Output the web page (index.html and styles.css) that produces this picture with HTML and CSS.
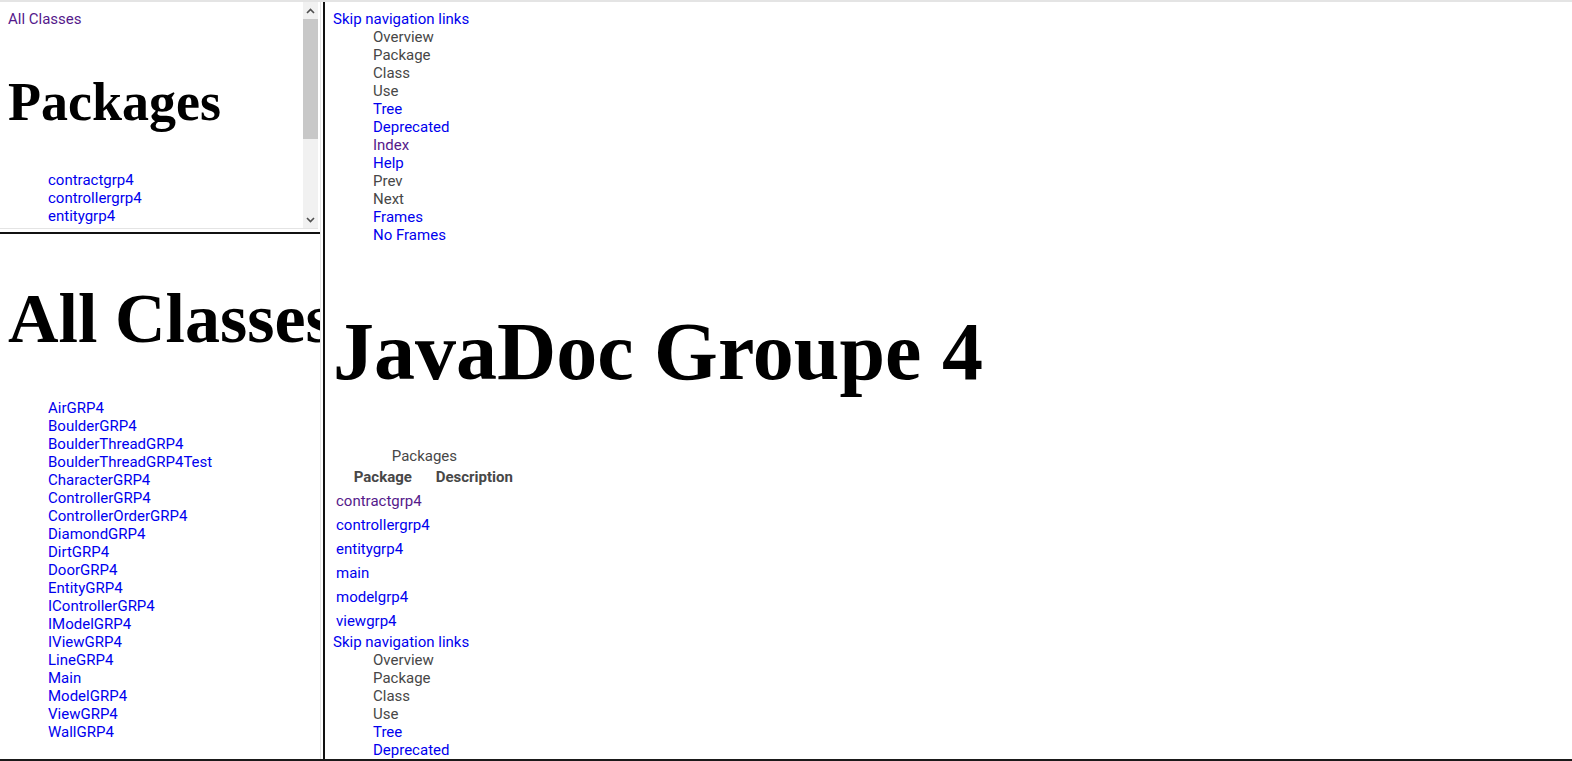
FILE: index.html
```html
<!DOCTYPE html>
<html lang="fr">
<head>
<meta charset="utf-8">
<title>JavaDoc Groupe 4</title>
<link rel="stylesheet" href="styles.css">
</head>
<body>
<div class="frameset">
  <div class="left">
    <div class="pkg-frame">
      <div class="pkg-content">
        <a class="link visited" href="#">All Classes</a>
        <h1 class="pkg-title">Packages</h1>
        <ul class="plain-list">
          <li><a class="link" href="#">contractgrp4</a></li>
          <li><a class="link" href="#">controllergrp4</a></li>
          <li><a class="link" href="#">entitygrp4</a></li>
          <li><a class="link" href="#">main</a></li>
          <li><a class="link" href="#">modelgrp4</a></li>
          <li><a class="link" href="#">viewgrp4</a></li>
        </ul>
      </div>
      <div class="scrollbar">
        <span class="sb-btn"><svg width="9" height="6" viewBox="0 0 9 6"><path d="M1 5 L4.5 1.5 L8 5" fill="none" stroke="#505050" stroke-width="1.6"/></svg></span>
        <div class="sb-track"><div class="sb-thumb"></div></div>
        <span class="sb-btn"><svg width="9" height="6" viewBox="0 0 9 6"><path d="M1 1 L4.5 4.5 L8 1" fill="none" stroke="#505050" stroke-width="1.6"/></svg></span>
      </div>
    </div>
    <div class="classes-frame">
      <h1 class="classes-title">All Classes</h1>
      <ul class="plain-list">
        <li><a class="link" href="#">AirGRP4</a></li>
        <li><a class="link" href="#">BoulderGRP4</a></li>
        <li><a class="link" href="#">BoulderThreadGRP4</a></li>
        <li><a class="link" href="#">BoulderThreadGRP4Test</a></li>
        <li><a class="link" href="#">CharacterGRP4</a></li>
        <li><a class="link" href="#">ControllerGRP4</a></li>
        <li><a class="link" href="#">ControllerOrderGRP4</a></li>
        <li><a class="link" href="#">DiamondGRP4</a></li>
        <li><a class="link" href="#">DirtGRP4</a></li>
        <li><a class="link" href="#">DoorGRP4</a></li>
        <li><a class="link" href="#">EntityGRP4</a></li>
        <li><a class="link" href="#">IControllerGRP4</a></li>
        <li><a class="link" href="#">IModelGRP4</a></li>
        <li><a class="link" href="#">IViewGRP4</a></li>
        <li><a class="link" href="#">LineGRP4</a></li>
        <li><a class="link" href="#">Main</a></li>
        <li><a class="link" href="#">ModelGRP4</a></li>
        <li><a class="link" href="#">ViewGRP4</a></li>
        <li><a class="link" href="#">WallGRP4</a></li>
      </ul>
    </div>
  </div>
  <div class="main">
    <a class="link" href="#">Skip navigation links</a>
    <ul class="plain-list">
      <li class="txt">Overview</li>
      <li class="txt">Package</li>
      <li class="txt">Class</li>
      <li class="txt">Use</li>
      <li><a class="link" href="#">Tree</a></li>
      <li><a class="link" href="#">Deprecated</a></li>
      <li><a class="link visited" href="#">Index</a></li>
      <li><a class="link" href="#">Help</a></li>
      <li class="txt">Prev</li>
      <li class="txt">Next</li>
      <li><a class="link" href="#">Frames</a></li>
      <li><a class="link" href="#">No Frames</a></li>
    </ul>
    <h1 class="main-title">JavaDoc Groupe 4</h1>
    <table class="pkg-table">
      <caption>Packages</caption>
      <thead>
        <tr><th>Package</th><th>Description</th></tr>
      </thead>
      <tbody>
        <tr><td><a class="link visited" href="#">contractgrp4</a></td><td></td></tr>
        <tr><td><a class="link" href="#">controllergrp4</a></td><td></td></tr>
        <tr><td><a class="link" href="#">entitygrp4</a></td><td></td></tr>
        <tr><td><a class="link" href="#">main</a></td><td></td></tr>
        <tr><td><a class="link" href="#">modelgrp4</a></td><td></td></tr>
        <tr><td><a class="link" href="#">viewgrp4</a></td><td></td></tr>
      </tbody>
    </table>
    <a class="link" href="#">Skip navigation links</a>
    <ul class="plain-list">
      <li class="txt">Overview</li>
      <li class="txt">Package</li>
      <li class="txt">Class</li>
      <li class="txt">Use</li>
      <li><a class="link" href="#">Tree</a></li>
      <li><a class="link" href="#">Deprecated</a></li>
      <li><a class="link visited" href="#">Index</a></li>
      <li><a class="link" href="#">Help</a></li>
      <li class="txt">Prev</li>
      <li class="txt">Next</li>
      <li><a class="link" href="#">Frames</a></li>
      <li><a class="link" href="#">No Frames</a></li>
    </ul>
  </div>
</div>
</body>
</html>
```
FILE: styles.css
```css
html, body {
  margin: 0;
  padding: 0;
  background: #fff;
}
body {
  font-family: Roboto, "Liberation Sans", sans-serif;
  font-size: 15px;
  line-height: 18px;
  color: #474747;
  overflow: hidden;
}
.frameset {
  display: flex;
  height: 761px;
  box-sizing: border-box;
  border-top: 2px solid #e4e4e4;
  border-bottom: 2px solid #1a1a1a;
  overflow: hidden;
}
.left {
  width: 321px;
  flex: none;
  display: flex;
  flex-direction: column;
  box-sizing: border-box;
  border-right: 1px solid #e4e4e4;
  margin-right: 2px;
}
.pkg-frame {
  width: 318px;
  height: 227px;
  flex: none;
  display: flex;
  box-sizing: border-box;
  border-bottom: 1px solid #e4e4e4;
}
.pkg-content {
  flex: 1;
  min-width: 0;
  padding: 8px 8px 0;
  overflow: hidden;
  white-space: nowrap;
}
.scrollbar {
  width: 15px;
  flex: none;
  display: flex;
  flex-direction: column;
  background: #f1f1f1;
}
.sb-btn {
  height: 17px;
  flex: none;
  display: flex;
  align-items: center;
  justify-content: center;
}
.sb-track {
  flex: 1;
}
.sb-thumb {
  height: 120px;
  margin: 0 0 0 0;
  background: #c8c8c8;
}
.classes-frame {
  flex: 1;
  margin-top: 3px;
  border-top: 2px solid #111;
  padding: 0 8px;
  overflow: hidden;
  white-space: nowrap;
}
.main {
  flex: 1;
  border-left: 2px solid #111;
  padding: 8px 8px;
  overflow: hidden;
}
.link {
  color: #0000ee;
  text-decoration: none;
  display: inline-block;
}
.link.visited {
  color: #551a8b;
}
.plain-list {
  list-style: none;
  margin: 0;
  padding: 0 0 0 40px;
}
h1 {
  font-family: "Liberation Serif", "Times New Roman", serif;
  font-weight: bold;
  color: #000;
}
.pkg-title {
  font-size: 54px;
  line-height: 54px;
  margin: 47px 0 42px;
}
.classes-title {
  font-size: 70px;
  line-height: 70px;
  margin: 50px 0 45px;
}
.main-title {
  font-size: 82px;
  line-height: 82px;
  margin: 67px 0 54px;
  white-space: nowrap;
}
.pkg-table {
  border-collapse: collapse;
  border-spacing: 0;
}
.pkg-table caption {
  line-height: 18px;
  text-align: center;
}
.pkg-table th {
  height: 24px;
  padding: 0 3px;
  font-weight: bold;
  text-align: center;
  box-sizing: border-box;
}
.pkg-table td {
  height: 24px;
  padding: 0 3px;
  box-sizing: border-box;
}
```
